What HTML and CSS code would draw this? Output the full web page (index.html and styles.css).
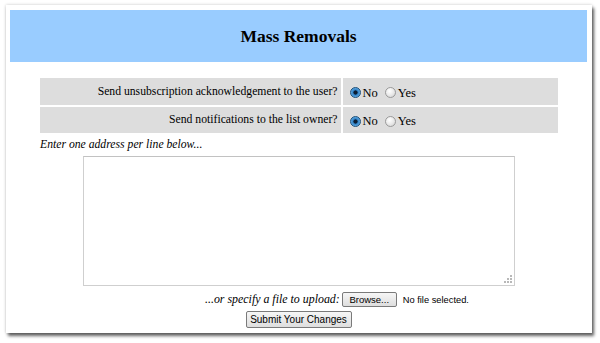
FILE: index.html
```html
<!DOCTYPE html>
<html>
<head>
<meta charset="utf-8">
<title>Mass Removals</title>
<link rel="stylesheet" href="styles.css">
</head>
<body>
<div class="frame">
  <div class="header"><h1>Mass Removals</h1></div>
  <table class="opts">
    <tr>
      <td class="q">Send unsubscription acknowledgement to the user?</td>
      <td class="a">
        <label class="opt"><input type="radio" name="ack" checked><span>No</span></label>
        <label class="opt"><input type="radio" name="ack"><span>Yes</span></label>
      </td>
    </tr>
    <tr>
      <td class="q">Send notifications to the list owner?</td>
      <td class="a">
        <label class="opt"><input type="radio" name="notif" checked><span>No</span></label>
        <label class="opt"><input type="radio" name="notif"><span>Yes</span></label>
      </td>
    </tr>
  </table>
  <div class="hint">Enter one address per line below...</div>
  <div class="tawrap">
    <textarea class="addrs"></textarea>
    <svg class="grip" width="8" height="8" viewBox="0 0 8 8">
      <rect x="6" y="0" width="2" height="2" fill="#b8b8b8"/>
      <rect x="3" y="3" width="2" height="2" fill="#b8b8b8"/>
      <rect x="6" y="3" width="2" height="2" fill="#b8b8b8"/>
      <rect x="0" y="6" width="2" height="2" fill="#b8b8b8"/>
      <rect x="3" y="6" width="2" height="2" fill="#b8b8b8"/>
      <rect x="6" y="6" width="2" height="2" fill="#b8b8b8"/>
    </svg>
  </div>
  <div class="upload">
    <span class="uplabel">...or specify a file to upload:</span>
    <button class="btn browse" type="button">Browse...</button>
    <span class="nofile">No file selected.</span>
  </div>
  <div class="submitrow">
    <button class="btn submit" type="button">Submit Your Changes</button>
  </div>
</div>
</body>
</html>
```
FILE: styles.css
```css
html, body {
  margin: 0;
  padding: 0;
  background: #ffffff;
}
body {
  font-family: "Liberation Serif", "Times New Roman", serif;
  font-size: 11.7px;
  color: #000;
  padding-top: 5px;
  padding-left: 6px;
  height: 343px;
  box-sizing: border-box;
}
.frame {
  width: 586px;
  height: 328px;
  box-sizing: border-box;
  padding: 5px 5px 0 4px;
  background: #fff;
  box-shadow: 2px 3px 3px rgba(0,0,0,0.6), 0 0 3px rgba(0,0,0,0.22);
}
.header {
  height: 52px;
  background: #99ccff;
  display: flex;
  align-items: center;
  justify-content: center;
}
.header h1 {
  margin: 0;
  font-size: 17.5px;
  font-weight: bold;
  line-height: 1;
  padding-top: 1px;
}
.opts {
  border-collapse: separate;
  border-spacing: 2px;
  width: 522px;
  margin: 14px auto 0;
  table-layout: fixed;
}
.opts td {
  background: #dddddd;
  height: 26.5px;
  padding: 0;
}
.opts td.q {
  width: 298px;
  text-align: right;
  padding-right: 3px;
}
.opts td.a {
  padding-left: 7px;
}
.opt {
  display: inline-flex;
  align-items: center;
  margin: 3px 4px 0 0;
  vertical-align: middle;
}
.opt input {
  -webkit-appearance: none;
  appearance: none;
  width: 11px;
  height: 11px;
  margin: 0 2px 0 0;
  border-radius: 50%;
  border: 1px solid #9a9a9a;
  background: radial-gradient(circle at 40% 35%, #ffffff 0%, #ececec 45%, #cfcfcf 100%);
  box-sizing: border-box;
}
.opt input:checked {
  border-color: #1c4f7a;
  background: radial-gradient(circle at 50% 50%, #0b1e33 0%, #0b1e33 28%, #2f7fc4 38%, #5aa6e0 70%, #2d6fa8 100%);
}
.opt span {
  font-size: 12.5px;
  line-height: 1;
}
.hint {
  font-style: italic;
  margin: 3px 0 0 30px;
  line-height: 14px;
}
.tawrap {
  position: relative;
  width: 432px;
  height: 130px;
  margin: 4px auto 0;
}
.addrs {
  display: block;
  width: 432px;
  height: 130px;
  box-sizing: border-box;
  margin: 0;
  border: 1px solid #cfcfcf;
  border-top-color: #c2c2c2;
  resize: none;
  background: #fff;
}
.grip {
  position: absolute;
  right: 3px;
  bottom: 3px;
}
.upload {
  display: flex;
  align-items: center;
  height: 19px;
  margin-top: 4px;
  padding-left: 195px;
}
.uplabel {
  font-style: italic;
  font-size: 11.9px;
  margin-right: 2px;
}
.btn {
  font-family: "Liberation Sans", Arial, sans-serif;
  font-size: 9.5px;
  color: #000;
  border: 1px solid #7a7a7a;
  border-radius: 2px;
  background: linear-gradient(#f6f6f6, #dedede);
  padding: 0;
  margin: 0;
  box-sizing: border-box;
}
.browse {
  width: 55px;
  height: 15px;
}
.nofile {
  font-family: "Liberation Sans", Arial, sans-serif;
  font-size: 9.3px;
  margin-left: 6px;
}
.submitrow {
  display: flex;
  justify-content: center;
  margin-top: 2px;
}
.submit {
  width: 106px;
  height: 17px;
  font-size: 10px;
}
```
